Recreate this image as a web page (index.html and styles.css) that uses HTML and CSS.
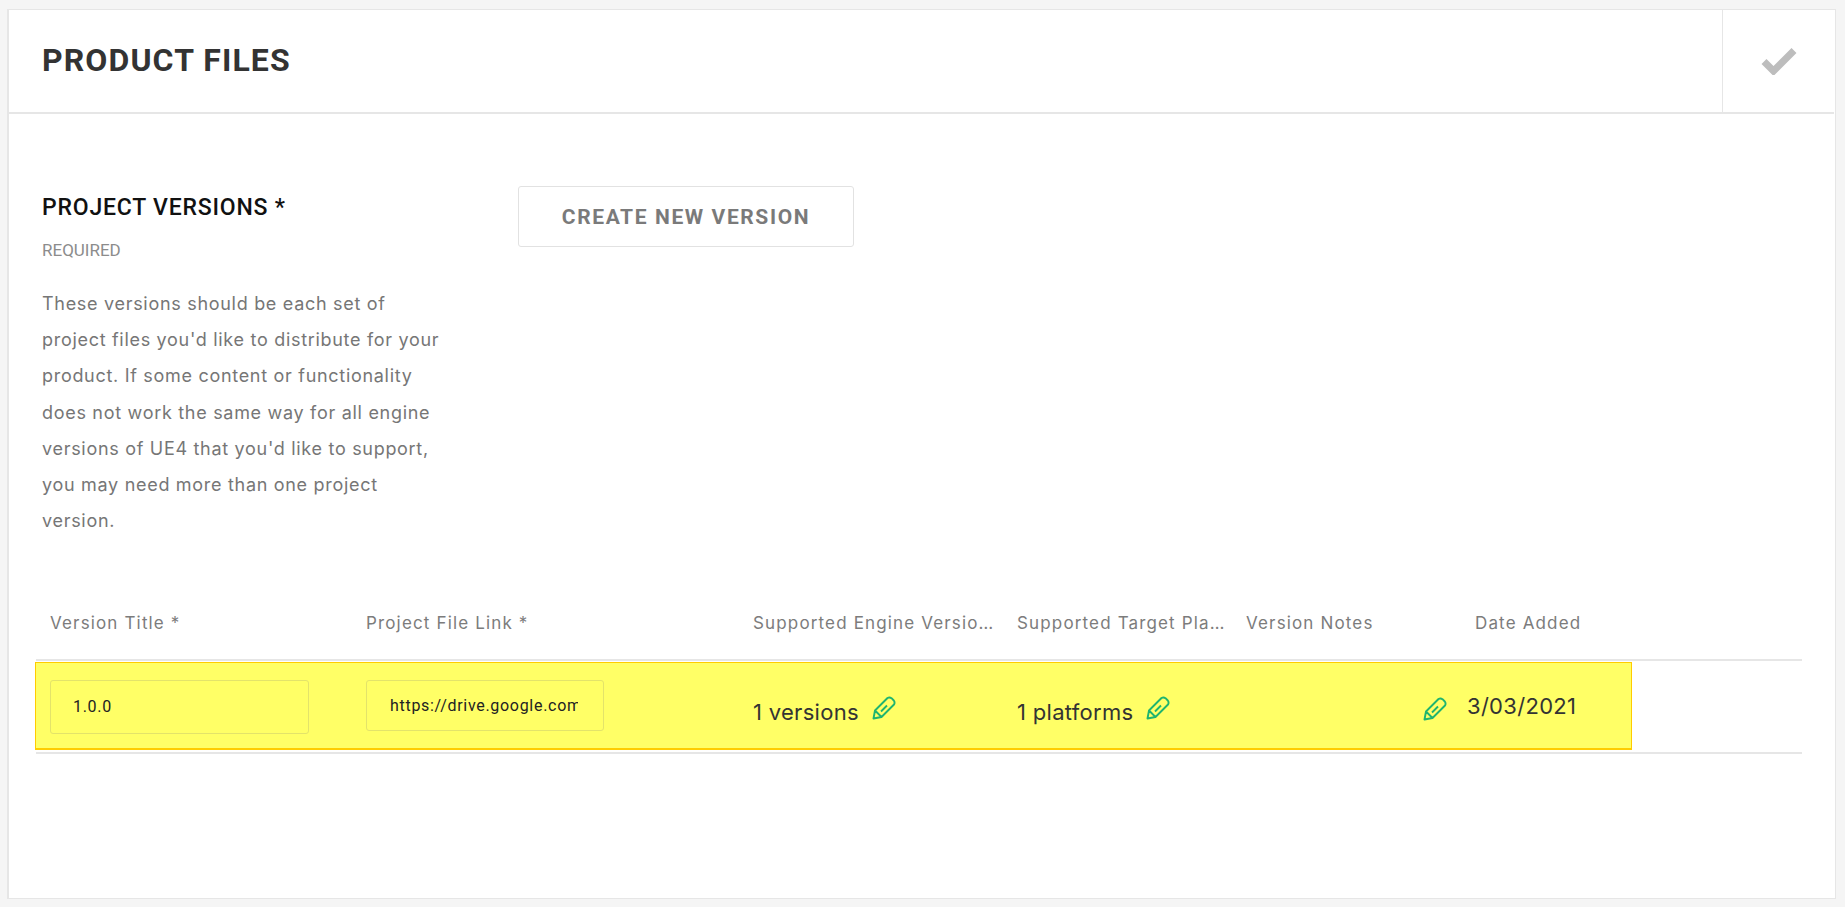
FILE: index.html
```html
<!doctype html>
<html lang="en">
    <head>
        <meta charset="utf-8">
        <title>Product files</title>
        <link rel="stylesheet" href="styles.css">
    </head>
    <body>
        <main class="card">
            <header class="card-header">
                <h1>Product Files</h1>
                <div class="card-status">
                    <svg width="36" height="28" viewBox="0 0 36 28"><path d="M3 14.5 L12.5 24 L33 3.5" fill="none" stroke="#bdbdbd" stroke-width="7"/></svg>
                </div>
            </header>
            <section class="card-body">
                <div class="versions-top">
                    <div class="versions-info">
                        <h2>Project Versions *</h2>
                        <div class="required">Required</div>
                        <p>These versions should be each set of project files you'd like to distribute for your product. If some content or functionality does not work the same way for all engine versions of UE4 that you'd like to support, you may need more than one project version.</p>
                    </div>
                    <button class="button" type="button">Create New Version</button>
                </div>
                <div class="table">
                    <div class="columns table-head">
                        <div>Version Title *</div>
                        <div>Project File Link *</div>
                        <div>Supported Engine Versions</div>
                        <div>Supported Target Platforms</div>
                        <div>Version Notes</div>
                        <div>Date Added</div>
                    </div>
                    <div class="table-row">
                        <div class="columns row-highlight">
                            <div><input class="input input-title" type="text" value="1.0.0"></div>
                            <div><input class="input input-link" type="text" value="https://drive.google.com/file/d/1"></div>
                            <div class="cell-edit">1 versions
                                <svg class="pencil" viewBox="0 0 24 24"><path d="M1.5 22.5 L3 14.5 L15.5 2 Q17.5 .8 19.5 2.2 L21.8 4.5 Q23.2 6.5 22 8.5 L9.5 21 Z M3 14.5 L9.5 21 M9 15.5 L15 9.5" fill="none" stroke="#1fb46f" stroke-width="1.9" stroke-linejoin="round"/></svg>
                            </div>
                            <div class="cell-edit">1 platforms
                                <svg class="pencil" viewBox="0 0 24 24"><path d="M1.5 22.5 L3 14.5 L15.5 2 Q17.5 .8 19.5 2.2 L21.8 4.5 Q23.2 6.5 22 8.5 L9.5 21 Z M3 14.5 L9.5 21 M9 15.5 L15 9.5" fill="none" stroke="#1fb46f" stroke-width="1.9" stroke-linejoin="round"/></svg>
                            </div>
                            <div class="cell-notes">
                                <svg class="pencil" viewBox="0 0 24 24"><path d="M1.5 22.5 L3 14.5 L15.5 2 Q17.5 .8 19.5 2.2 L21.8 4.5 Q23.2 6.5 22 8.5 L9.5 21 Z M3 14.5 L9.5 21 M9 15.5 L15 9.5" fill="none" stroke="#1fb46f" stroke-width="1.9" stroke-linejoin="round"/></svg>
                            </div>
                            <div class="cell-date">3/03/2021</div>
                        </div>
                    </div>
                </div>
            </section>
        </main>
    </body>
</html>
```

FILE: styles.css
```css
* {
    box-sizing: border-box;
    margin: 0;
    padding: 0;
}

body {
    background: #f5f5f5;
    font-family: Inter, "Liberation Sans", sans-serif;
    height: 907px;
    overflow: hidden;
    padding: 9px 9px 8px 7px;
}

.card {
    background: #fff;
    border: 1px solid #e6e6e6;
    border-left-width: 2px;
    height: 890px;
}

.card-header {
    display: flex;
    height: 104px;
    margin-right: 1px;
    border-bottom: 2px solid #e6e6e6;
}

.card-header h1 {
    flex: 1;
    font-family: Roboto, sans-serif;
    font-size: 32px;
    font-weight: 700;
    letter-spacing: 1.1px;
    line-height: 100px;
    padding-left: 33px;
    color: #333;
    text-transform: uppercase;
}

.card-status {
    width: 112px;
    border-left: 1px solid #e6e6e6;
    display: flex;
    align-items: center;
    justify-content: center;
}

.card-body {
    padding: 74px 33px 0 27px;
}

.versions-top {
    display: flex;
    gap: 66px;
}

.versions-info {
    width: 416px;
    padding-left: 6px;
}

.versions-info h2 {
    font-family: Roboto, sans-serif;
    font-size: 23px;
    font-weight: 500;
    letter-spacing: .8px;
    line-height: 40px;
    color: #111;
    text-transform: uppercase;
}

.required {
    font-family: Roboto, sans-serif;
    font-size: 17px;
    line-height: 20px;
    margin-top: 12px;
    color: #8c8c8c;
    text-transform: uppercase;
}

.versions-info p {
    font-size: 18px;
    letter-spacing: .7px;
    line-height: 36.2px;
    margin-top: 26px;
    color: #767676;
}

.button {
    width: 336px;
    height: 61px;
    margin-top: -2px;
    background: #fff;
    border: 1px solid #e2e2e2;
    border-radius: 3px;
    font-family: Roboto, sans-serif;
    font-size: 21px;
    font-weight: 700;
    letter-spacing: 1.6px;
    color: #7a7a7a;
    text-transform: uppercase;
}

.table {
    margin-top: 71px;
}

.columns {
    display: grid;
    grid-template-columns: 316px 387px 264px 229px 229px 1fr;
}

.table-head {
    height: 49px;
    padding-left: 14px;
    font-size: 17px;
    letter-spacing: 1.15px;
    line-height: 26px;
    color: #7c7c7c;
}

.table-head > div {
    overflow: hidden;
    white-space: nowrap;
    text-overflow: ellipsis;
    padding-right: 18px;
}

.table-row {
    border-top: 2px solid #e6e6e6;
    border-bottom: 2px solid #e6e6e6;
    padding: 1px 0 2px;
}

.row-highlight {
    width: 1597px;
    height: 88px;
    margin-left: -1px;
    padding-left: 14px;
    align-items: center;
    background: #ffff66;
    border: 1px solid #fc0;
    border-bottom-width: 2px;
    color: #333;
}

.input {
    display: block;
    background: transparent;
    border: 1px solid #e3e36a;
    border-radius: 3px;
    font-family: Roboto, sans-serif;
    font-size: 16px;
    letter-spacing: .7px;
    color: #222;
}

.input-title {
    width: 259px;
    height: 54px;
    margin-top: 2px;
    padding: 0 22px;
}

.input-link {
    width: 238px;
    height: 51px;
    padding: 0 25px 0 23px;
}

.cell-edit {
    display: flex;
    align-items: center;
    gap: 13px;
    font-size: 22px;
    letter-spacing: .3px;
    padding-top: 12px;
}

.pencil {
    width: 24px;
    height: 24px;
    flex: none;
    margin-top: -8px;
}

.cell-notes {
    display: flex;
    justify-content: flex-end;
    padding-right: 28px;
}

.cell-notes .pencil {
    margin-top: 6px;
}

.cell-date {
    font-size: 22px;
    letter-spacing: .3px;
    margin-left: -8px;
}
```
